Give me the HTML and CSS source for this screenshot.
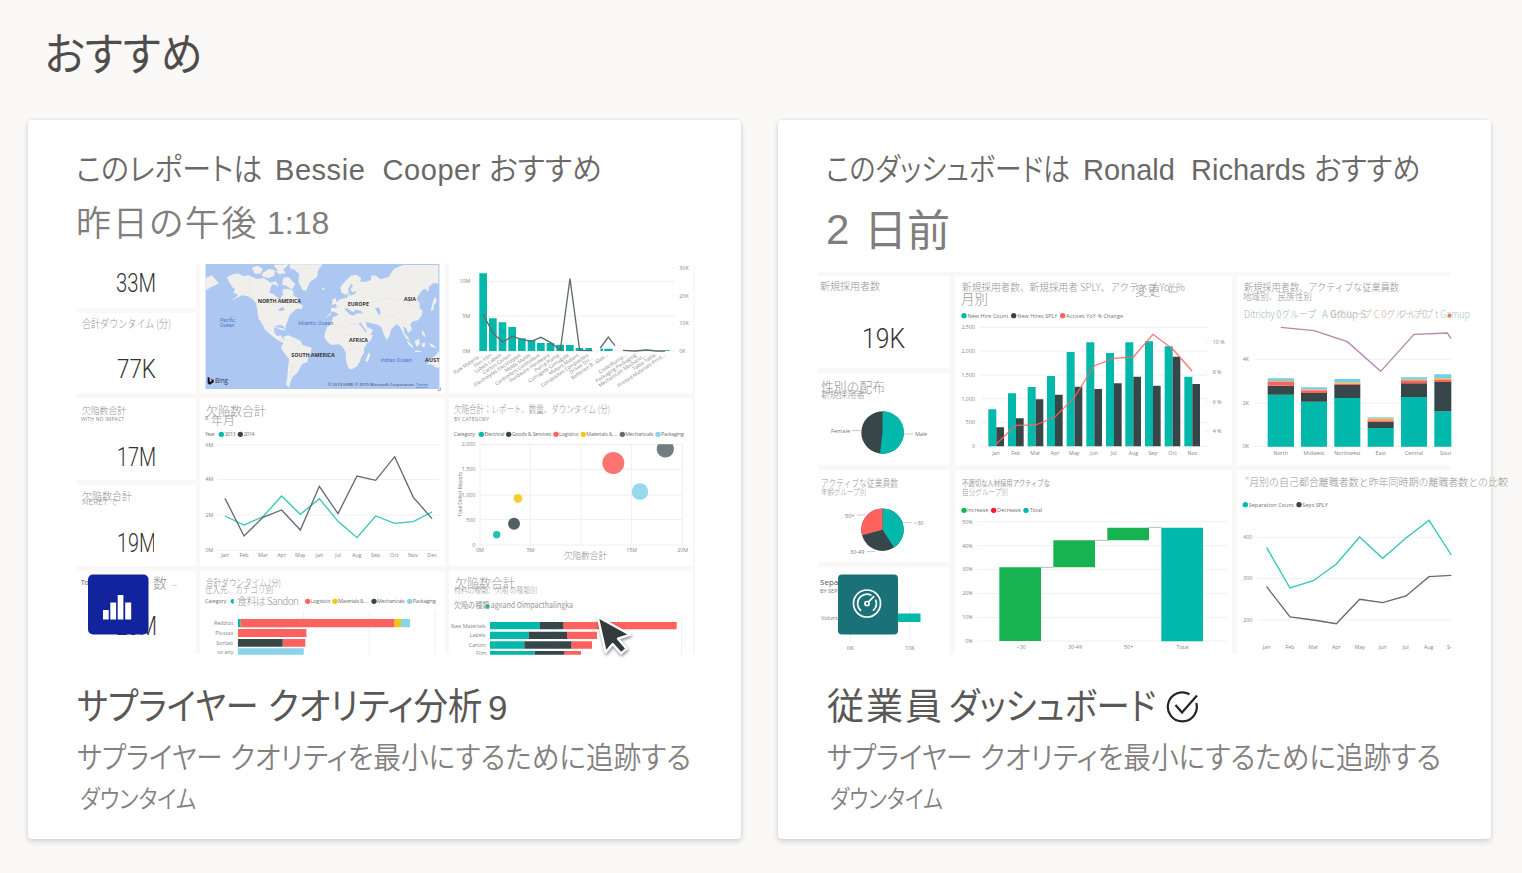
FILE: index.html
```html
<!DOCTYPE html>
<html lang="ja">
<head>
<meta charset="utf-8">
<title>おすすめ</title>
<link rel="stylesheet" href="styles.css">
</head>
<body>
<main class="page">
<h1 class="heading">おすすめ</h1>
<div class="cards">

<article class="card">
  <p class="from"><span class="jp a1">このレポートは</span><span class="latin b1">Bessie&nbsp; Cooper</span><span class="jp c1">おすすめ</span></p>
  <p class="time"><span class="jp t1">昨日の午後</span><span class="latin t2">1:18</span></p>
  <div class="thumb supplier">
    <div class="tile"><svg viewBox="76 264 120 44"><text class="kpi" x="116" y="292" textLength="40" lengthAdjust="spacingAndGlyphs">33M</text></svg></div>
    <div class="tile wide top"><svg viewBox="200 264 245 129">
      <g transform="translate(70 255) scale(.33333)">
        <clipPath id="mapclip"><rect x="406" y="27" width="703" height="375"/></clipPath>
        <g clip-path="url(#mapclip)">
          <rect x="406" y="27" width="703" height="375" fill="#abc7f2"/>
          <g fill="#f0efeb">
            <path d="M405 70l20-9 10 10 12 14-10 5-17 8-10 7-6-1z"/>
            <path d="M470 68l14-9 18-4 20 9 14-3 24 11 22-3 20 14 16-4 7 12-5 12-13 4 8 13 14 13 8-12 1-17 12-3 18 5 3 16 14 9 4 8-5 6 14 6-1 10-18 1-11 10-9 8-5 16-7 16-1 14-5-12-10-4-13 2-6 10 2 13 8 8 11-2 4 8 6 12 10 3-2 4-18-7-15-9-16-13-17-15-7-14-13-20-3-25-4-20-10-12-14-9-18-3-15 7-22 10 18-11 8-8-15-6 6-11-9-5z"/>
            <path d="M545 38l18-6 15 9-5 14-18 2zM577 55l20-13 18 3-2 17-18 8-18-6zM610 29l46-1-14 15-17 5zM616 48l24-4 8 10-20 4zM640 68l16-2 20 22-11 16-14-10-15-5z"/>
            <path d="M660 28h98l-14 18-2 20-22 14-11 27-11-2-13-25 3-22-14-14-15-4z"/>
            <path d="M640 245l15-4 19 8 18 9 6 12 27 8-2 14-8 12-3 17-15 6-10 17-7 12-10 6-7 14-4 15 1 8-12-10 4-22 2-28 3-26-14-18-10-16 4-10 5-8z"/>
            <path d="M790 186l22-8 19-2 3 11 16 6 17-1 8 17 10 18 8 13 16-1-6 16-15 15-6 10v15l-8 10-5 16-8 13-14 8-9 1-7-16-4-17 1-17-10-17-10-8-23 2-14-10-8-15 2-12 6-17 10-7zM897 291l4 10-8 20-7-4z"/>
            <path d="M783 178v-19l18-1-4-15 15-11 20-4 5-16-9 8-14-7-3-16 14-18 18-17 16-3 14 10-2 12 18-1 14-5 1-14 15 2 13 10 24-7 15-24 28-12h106v56l-15-2-13 11-2 16-8-10-10 4-10 14-7 12 10 17-2 10 10 9-3 15-11 14-15 3-8 8 5 17-12 10-5-14-9-6 3 20 11 12 6 12-13-9-10-19-9-17-9-5-15 14-6 20-7 13-9-15-8-24-15-8-19-4-13-4 5 16 17 9-6 12-20 16-13-8-7-19-13-23-18-5-10-10-7-10-7 9-7-13-14-5-12 11-13 12zM785 150l3-18 9-4 3 18zM757 98l9 4-10 4z"/>
            <path d="M1081 312l15-10 9-11 14 2v43l-20 2-16-11-12 3zM1010 255l18 17 4 10-18-15zM1034 258l13-7 3 15-10 9zM1055 266l9-4 2 12-9 3zM1035 286l20 3-2 3-18-2zM1076 264l14 6 10 9-16-3zM1056 222l8 15 4 11-12-10zM1082 168l8-3 2-15 8-9-3-15-7 9-4 17zM614 216l25 4 7 8-20-6z"/>
          </g>
          <g fill="#abc7f2"><path d="M606 88l15 3 5 17 15 10-15 13-13-13-15-5zM625 162l15-6 4 9-15 4zM834 103l10-17 5 4-8 14 7 8 12-5-6 10-14 5zM824 163l5-5 20 14 8-8 16 3 5 8-22 1-2 6-14-3zM915 160l12-3 5 14-5 12-5-11zM870 201l20 28-3 3-20-26z"/></g>
          <g fill="none" stroke="#dedcd5" stroke-width="1"><path d="M540 68v53l28 17h62M570 196l35 12 12 17M668 248l5 22 16 9M681 300l-17-12-12 13M676 338l-9-9-6 40M786 206l32 15 25-14 27 1M816 245l26-7 17 9M830 286l26-7 18 8M850 130l18 9 23-12M900 145l45-17 44 9 34-10 43 12M930 190l28-12 44 22M996 140l40 14 28-18"/></g>
          <g class="map-label"><text x="563" y="144" textLength="130">NORTH AMERICA</text><text x="833" y="153" textLength="64">EUROPE</text><text x="1002" y="138" textLength="36">ASIA</text><text x="837" y="262" textLength="57">AFRICA</text><text x="664" y="307" textLength="130">SOUTH AMERICA</text><text x="1065" y="321" textLength="55">AUSTR</text></g>
          <g class="sea"><text x="450" y="200">Pacific</text><text x="450" y="217">Ocean</text><text x="684" y="210" textLength="105">Atlantic Ocean</text><text x="932" y="321" textLength="93">Indian Ocean</text></g>
          <path d="M413 366l6 2v13l7-3-4-7 9 4v7l-12 7-6-4z" fill="#111"/><text x="435" y="384" font-size="19" fill="#333">Bing</text>
          <text x="774" y="393" font-size="12" fill="#333" textLength="257">© 2019 HERE © 2019 Microsoft Corporation</text><text x="1038" y="393" font-size="12" fill="#3a61b5" text-decoration="underline" textLength="36">Terms</text>
        </g>
        <path d="M1103 406h8v-8" stroke="#999" fill="none" stroke-width="3"/>
      </g></svg></div>
    <div class="tile wide top"><svg viewBox="449 264 244 129">
      <g transform="translate(385 255) scale(.33333)">
        <path class="grid" d="M272 79h597M272 183h597M272 288h597M862 39h8M862 122h8M862 205h8"/>
        <path fill="#01b8aa" d="M283 55h23v233h-23zM312 190h23v98h-23zM341 202h23v86h-23zM370 216h23v72h-23zM399 250h23v38h-23zM428 255h23v33h-23zM456 264h23v24h-23zM485 264h23v24h-23zM514 269h23v19h-23zM543 270h23v18h-23zM572 279h23v9h-23zM601 279h20v9h-20zM646 281h8v7h-8zM658 281h25v7h-25zM773 284h25v4h-25zM840 286h15v2h-15z"/>
        <path class="dark-line" d="M295 178l29 57 29 26 29-17 28 9 29 6 29-12 29 16 29 22 29-214 29 215 38 1M646 279l24-33 20 26M714 286l36 2 35-3 30 3h25"/>
        <g class="ax end"><text x="256" y="85">10M</text><text x="256" y="189">5M</text><text x="256" y="294">0M</text></g>
        <g class="ax"><text x="883" y="45">30K</text><text x="883" y="128">20K</text><text x="883" y="211">10K</text><text x="883" y="294">0K</text></g>
        <g class="ax end slanted">
          <text transform="translate(292 303) rotate(-34)">Raw Materia...</text><text transform="translate(322 303) rotate(-34)">Film Film</text><text transform="translate(350 303) rotate(-34)">Labels Labels</text><text transform="translate(379 303) rotate(-34)">Carton Carton</text><text transform="translate(408 303) rotate(-34)">Electrolytes Electrolytes</text><text transform="translate(437 303) rotate(-34)">Molds Molds</text><text transform="translate(466 303) rotate(-34)">Controllers Controllers</text><text transform="translate(495 303) rotate(-34)">Hardware Hardware</text><text transform="translate(524 303) rotate(-34)">Pump Pump</text><text transform="translate(553 303) rotate(-34)">Corrugate Corrugate</text><text transform="translate(582 303) rotate(-34)">Motors Motors</text><text transform="translate(611 303) rotate(-34)">Composites Composites</text><text transform="translate(624 312) rotate(-34)">Drives Dri...</text><text transform="translate(635 325) rotate(-34)">Batteries B...</text><text transform="translate(670 303) rotate(-34)">Glas...</text><text transform="translate(692 325) rotate(-34)">Crates...</text><text transform="translate(726 303) rotate(-34)">Pump...</text><text transform="translate(755 303) rotate(-34)">Packaging Packaging</text><text transform="translate(784 303) rotate(-34)">Mechanicals Mechanic...</text><text transform="translate(813 303) rotate(-34)">Table Table</text><text transform="translate(842 303) rotate(-34)">Printed Materials Print...</text>
        </g>
      </g></svg></div>
    <div class="tile"><svg viewBox="76 313 120 80"><text class="ja" x="82" y="328" font-size="11" textLength="89" lengthAdjust="spacingAndGlyphs">合計ダウンタイム (分)</text><text class="kpi" x="117" y="378" textLength="39" lengthAdjust="spacingAndGlyphs">77K</text></svg></div>
    <div class="tile"><svg viewBox="76 398 120 82"><text class="ja" x="82" y="414" font-size="9.5" textLength="44" lengthAdjust="spacingAndGlyphs">欠陥数合計</text><text class="cap" x="81" y="421" textLength="43">WITH NO IMPACT</text><text class="kpi" x="117" y="466" textLength="39" lengthAdjust="spacingAndGlyphs">17M</text></svg></div>
    <div class="tile wide tall"><svg viewBox="200 398 245 168">
      <text class="ja" x="206" y="416" font-size="12.5" textLength="60" lengthAdjust="spacingAndGlyphs">欠陥数合計</text><text class="cap" x="205" y="420">B</text><text class="ja" x="211" y="425" font-size="12.5" textLength="24" lengthAdjust="spacingAndGlyphs">年月</text>
      <g transform="translate(70 455) scale(.33333)">
        <g class="lg"><text x="405" y="-57" textLength="30">Year</text><text x="464" y="-57" textLength="33">2013</text><text x="521" y="-57" textLength="33">2014</text></g>
        <circle cx="454" cy="-62" r="8" fill="#01b8aa"/><circle cx="511" cy="-62" r="8" fill="#374649"/>
        <path class="grid" d="M443-30h666M443 74h666M443 180h666M443 286h666"/>
        <g class="ax end"><text x="430" y="-25">6M</text><text x="430" y="79">4M</text><text x="430" y="186">2M</text><text x="430" y="291">0M</text></g>
        <path class="teal-line" d="M465 183l57 27 57-25 56-62 56 55 57-47 56 68 57 49 56-65 57 22 56-5 56-29" transform="translate(0 0)"/>
        <path class="dark-line" d="M465 130l57 113 57-56 56-22 56 60 57-131 56 82 57-113 56 13 57-71 56 122 56 64"/>
        <g class="ax mid"><text x="465" y="307">Jan</text><text x="522" y="307">Feb</text><text x="579" y="307">Mar</text><text x="635" y="307">Apr</text><text x="691" y="307">May</text><text x="748" y="307">Jan</text><text x="804" y="307">Jul</text><text x="860" y="307">Aug</text><text x="917" y="307">Sep</text><text x="973" y="307">Oct</text><text x="1029" y="307">Nov</text><text x="1086" y="307">Dec</text></g>
      </g></svg></div>
    <div class="tile wide tall"><svg viewBox="449 398 244 168">
      <text class="ja" x="454" y="413" font-size="10" textLength="156" lengthAdjust="spacingAndGlyphs">欠陥合計：レポート、数量、ダウンタイム (分)</text><text class="cap" x="454" y="421" textLength="35">BY CATEGORY</text>
      <g transform="translate(385 455) scale(.33333)">
        <g class="lg"><text x="206" y="-57" textLength="64">Category</text><text x="298" y="-57" textLength="60">Electrical</text><text x="380" y="-57" textLength="119">Goods &amp; Services</text><text x="522" y="-57" textLength="59">Logistics</text><text x="604" y="-57" textLength="93">Materials &amp; ...</text><text x="721" y="-57" textLength="84">Mechanicals</text><text x="828" y="-57" textLength="69">Packaging</text></g>
        <circle cx="289" cy="-62" r="8" fill="#01b8aa"/><circle cx="371" cy="-62" r="8" fill="#374649"/><circle cx="513" cy="-62" r="8" fill="#fd625e"/><circle cx="595" cy="-62" r="8" fill="#f2c80f"/><circle cx="712" cy="-62" r="8" fill="#5f6b6d"/><circle cx="819" cy="-62" r="8" fill="#8ad4eb"/>
        <path class="grid" d="M285-32h608M285 43h608M285 120h608M285 194h608M285 270h608M285-32v302M436-32v302M588-32v302M740-32v302M893-32v302"/>
        <g class="ax end"><text x="271" y="-26">2,000</text><text x="271" y="49">1,500</text><text x="271" y="125">1,000</text><text x="271" y="200">500</text><text x="271" y="275">0</text></g>
        <g class="ax mid"><text x="285" y="291">0M</text><text x="437" y="291">5M</text><text x="740" y="291">15M</text><text x="893" y="291">20M</text><text transform="translate(230 118) rotate(-90)" textLength="135">Total Defect Reports</text></g>
        <circle cx="335" cy="239" r="11" fill="#22bfb3"/><circle cx="387" cy="206" r="18" fill="#536063"/><circle cx="399" cy="130" r="13" fill="#f3cd30"/><circle cx="685" cy="24" r="33" fill="#fd7471"/><circle cx="765" cy="110" r="25" fill="#98d9ed"/><path d="M819-32h44a26 26 0 1 1-44 0z" fill="#727d7f"/>
      </g>
      <text class="ja" x="564" y="559" font-size="9.5" textLength="43" lengthAdjust="spacingAndGlyphs">欠陥数合計</text></svg></div>
    <div class="tile"><svg viewBox="76 485 120 81"><text class="ja" x="82" y="500" font-size="10.5" textLength="50" lengthAdjust="spacingAndGlyphs">欠陥数合計</text><text class="ja" x="82" y="505" font-size="8" textLength="36" lengthAdjust="spacingAndGlyphs">MERET で</text><clipPath id="nineteen"><path d="M110 525h44v35h-44z"/></clipPath><text clip-path="url(#nineteen)" class="kpi" x="117" y="552" textLength="39" lengthAdjust="spacingAndGlyphs">19M</text></svg></div>
    <div class="tile"><svg viewBox="76 571 120 83">
      <text x="81" y="585" font-size="6.5" fill="#555">To</text><text class="ja" x="153" y="588" font-size="14">数</text><text class="ja" x="172" y="586" font-size="10">..</text><text class="kpi" x="116" y="635" textLength="41" lengthAdjust="spacingAndGlyphs">20M</text>
      <rect x="88" y="574.5" width="60.5" height="60" rx="5" fill="#12239e"/>
      <path d="M103 610h5.7v9.5H103zM110.3 602.5h5.8v17h-5.8zM117.7 595h5.7v24.500h-5.7zM125.2 602.500h6v17h-6z" fill="#fff"/></svg></div>
    <div class="tile wide"><svg viewBox="200 571 245 83">
      <text class="ja" x="206" y="586" font-size="9.500" textLength="75" lengthAdjust="spacingAndGlyphs">合計ダウンタイム (分)</text><text class="ja" x="205" y="592.5" font-size="9.5" textLength="68" lengthAdjust="spacingAndGlyphs">仕入先、カテゴリ別</text><text class="ja" x="237" y="605" font-size="10" textLength="62">食料は Sandon</text>
      <g transform="translate(70 455) scale(.33333)">
        <g class="lg"><text x="405" y="445" textLength="64">Category</text><text x="722" y="445" textLength="60">Logistics</text><text x="804" y="445" textLength="92">Materials &amp; ...</text><text x="921" y="445" textLength="83">Mechanicals</text><text x="1028" y="445" textLength="70">Packaging</text></g>
        <path d="M491 432h-2a7 7 0 0 0 0 14h2z" fill="#01b8aa"/><circle cx="713" cy="439" r="8" fill="#fd625e"/><circle cx="795" cy="439" r="8" fill="#f2c80f"/><circle cx="912" cy="439" r="8" fill="#374649"/><circle cx="1019" cy="439" r="8" fill="#8ad4eb"/>
        <path class="grid" d="M504 468v130M701 468v130M898 468v130M1096 468v130"/>
        <path fill="#01b8aa" d="M504 492h8v25h-8z"/><path fill="#fd625e" d="M512 492h462v25H512zM504 522h205v24H504zM638 552h68v23h-68z"/><path fill="#f2c80f" d="M974 492h19v25h-19z"/><path fill="#8ad4eb" d="M993 492h27v25h-27zM504 580h197v19H504z"/><path fill="#374649" d="M504 552h134v23H504z"/>
        <g class="ax end"><text x="490" y="510">Reddoit</text><text x="490" y="539">Plustax</text><text x="490" y="569">Sonlab</text><text x="490" y="597">xx-any</text></g>
      </g></svg></div>
    <div class="tile wide"><svg viewBox="449 571 244 83">
      <text class="ja" x="455" y="588" font-size="12.500" textLength="60" lengthAdjust="spacingAndGlyphs">欠陥数合計</text><text class="ja" x="454" y="593" font-size="8" textLength="83" lengthAdjust="spacingAndGlyphs">材料の種類、欠陥 の種類別</text><circle cx="487.500" cy="606.500" r="2.2" fill="#01b8aa"/><text class="ja strong" x="454" y="607.500" font-size="8" textLength="119" lengthAdjust="spacingAndGlyphs">欠陥の種類 ageand Oimpacthalingka</text>
      <g transform="translate(385 455) scale(.33333)">
        <path class="grid" d="M315 485v114M506 485v114M700 485v114M890 485v114"/>
        <path fill="#01b8aa" d="M315 501h149v22H315zM315 530h116v22H315zM315 559h103v22H315zM315 588h134v11H315z"/><path fill="#374649" d="M464 501h72v22h-72zM431 530h115v22H431zM418 559h142v22H418zM449 588h90v11h-90z"/><path fill="#fd625e" d="M536 501h339v22H536zM546 530h90v22h-90zM560 559h61v22h-61zM539 588h49v11h-49z"/>
        <g class="ax end"><text x="302" y="518">Raw Materials</text><text x="302" y="547">Labels</text><text x="302" y="576">Carton</text></g><text class="ax" x="274" y="600">Film</text>
        <path class="cursor" d="M638 485l24 107 21-25 25 28 17-14-26-30 37-12z"/>
      </g></svg></div>
  </div>
  <h2 class="name"><span class="jp n1">サプライヤー</span><span class="jp n2">クオリティ分析</span><span class="latin n3">9</span></h2>
  <p class="desc"><span class="jp d1">サプライヤー</span><span class="jp d2">クオリティを最小にするために追跡する</span></p>
  <p class="sub"><span class="jp s1">ダウンタイム</span></p>
</article>

<article class="card">
  <p class="from"><span class="jp a2">このダッシュボードは</span><span class="latin b2">Ronald&nbsp; Richards</span><span class="jp c2">おすすめ</span></p>
  <p class="time big"><span class="latin t3">2</span><span class="jp t4">日前</span></p>
  <div class="thumb employee">
    <div class="tile"><svg viewBox="818 276 132 92"><text class="ja" x="820" y="290" font-size="10.500" textLength="60" lengthAdjust="spacingAndGlyphs">新規採用者数</text><text class="kpi large" x="862" y="348" textLength="43" lengthAdjust="spacingAndGlyphs">19K</text></svg></div>
    <div class="tile wide"><svg viewBox="955 276 277 189">
      <text class="ja" x="962" y="291" font-size="10.500" textLength="223" lengthAdjust="spacingAndGlyphs">新規採用者数、新規採用者 SPLY、アクティブ YoY %</text><text class="ja" x="961" y="304" font-size="13.500" textLength="27" lengthAdjust="spacingAndGlyphs">月別</text><text class="ja" x="1135" y="295" font-size="13" textLength="25" lengthAdjust="spacingAndGlyphs">変更</text><path d="M1169 287h8v5h-8zM1170 293l2-2" fill="none" stroke="#bbb"/>
      <g transform="translate(810 265) scale(.33333)">
        <g class="lg"><text x="473" y="158" textLength="122">New Hire Count</text><text x="622" y="158" textLength="120">New Hires SPLY</text><text x="769" y="158" textLength="170">Actives YoY % Change</text></g><circle cx="462" cy="152" r="8" fill="#01b8aa"/><circle cx="611" cy="152" r="8" fill="#374649"/><circle cx="758" cy="152" r="8" fill="#fd625e"/>
        <path class="grid" d="M512 187h683M512 258h683M512 330h683M512 401h683M512 473h683M512 544h683M1185 232h8M1185 321h8M1185 410h8M1185 499h8"/>
        <path fill="#01b8aa" d="M535 433h24v111h-24zM594 385h24v159h-24zM653 366h24v178h-24zM711 333h24v211h-24zM770 261h24v283h-24zM829 232h24v312h-24zM888 264h24v280h-24zM946 232h24v312h-24zM1005 229h24v315h-24zM1064 244h24v300h-24zM1123 335h24v209h-24z"/>
        <path fill="#374649" d="M559 487h23v57h-23zM618 460h23v84h-23zM677 403h23v141h-23zM735 389h23v155h-23zM794 365h23v179h-23zM853 372h23v172h-23zM912 355h23v189h-23zM970 335h23v209h-23zM1029 362h23v182h-23zM1088 275h23v269h-23zM1147 357h23v187h-23z"/>
        <path fill="none" stroke="#fd625e" stroke-opacity=".85" stroke-width="4" d="M558 538l59-57 59-1 59-24 58-58 59-95 59-23 59-4 59-68 59 44 58 66"/>
        <g class="ax end"><text x="495" y="193">2,500</text><text x="495" y="264">2,000</text><text x="495" y="335">1,500</text><text x="495" y="407">1,000</text><text x="495" y="478">500</text><text x="495" y="550">0</text></g>
        <g class="ax"><text x="1208" y="238">10 %</text><text x="1208" y="327">8 %</text><text x="1208" y="416">6 %</text><text x="1208" y="505">4 %</text></g>
        <g class="ax mid"><text x="558" y="569">Jan</text><text x="617" y="569">Feb</text><text x="676" y="569">Mar</text><text x="735" y="569">Apr</text><text x="793" y="569">May</text><text x="852" y="569">Jun</text><text x="911" y="569">Jul</text><text x="970" y="569">Aug</text><text x="1029" y="569">Sep</text><text x="1088" y="569">Oct</text><text x="1147" y="569">Nov</text></g>
      </g></svg></div>
    <div class="tile wide"><svg viewBox="1237 276 214 189">
      <text class="ja" x="1244" y="291" font-size="10.500" textLength="155" lengthAdjust="spacingAndGlyphs">新規採用者数、アクティブな従業員数</text><text class="ja" x="1243" y="300" font-size="9" textLength="69" lengthAdjust="spacingAndGlyphs">地域別、民族性別</text>
      <g class="groups" font-size="10"><text x="1244" y="318" textLength="72" lengthAdjust="spacingAndGlyphs" fill="#9fb5b2">Ditrichy 0グループ</text><text x="1322" y="318" textLength="44" lengthAdjust="spacingAndGlyphs" fill="#9fb5b2">A Group S</text><text x="1331" y="318" textLength="96" lengthAdjust="spacingAndGlyphs" fill="#d6b29d">0グループ C 0グループ0</text><text x="1398" y="318" textLength="72" lengthAdjust="spacingAndGlyphs" fill="#a9c1c7">グループ t Gamup</text></g><circle cx="1449.500" cy="315.500" r="2" fill="#f47c4a"/>
      <g transform="translate(1115 265) scale(.33333)">
        <path class="grid" d="M418 283h590M418 414h590M418 544h590"/>
        <path fill="#01b8aa" d="M458 389h79v156h-79zM558 410h78v135h-78zM658 399h78v146h-78zM758 489h78v56h-78zM858 396h78v149h-78zM958 439h51v106h-51z"/>
        <path fill="#374649" d="M458 362h79v27h-79zM558 384h78v26h-78zM658 360h78v39h-78zM758 470h78v19h-78zM858 355h78v41h-78zM958 351h51v88h-51z"/>
        <path fill="#fd625e" d="M458 351h79v11h-79zM558 376h78v8h-78zM658 356h78v4h-78zM758 466h78v4h-78zM858 346h78v9h-78zM958 345h51v6h-51z"/>
        <path fill="#f3b44d" d="M458 348h79v3h-79zM558 373h78v3h-78zM658 352h78v4h-78zM758 460h78v6h-78zM858 343h78v3h-78zM958 340h51v5h-51z"/>
        <path fill="#74cfe8" d="M458 340h79v8h-79zM558 367h78v6h-78zM658 342h78v10h-78zM758 457h78v3h-78zM858 337h78v6h-78zM958 328h51v12h-51z"/>
        <path fill="none" stroke="#a66999" stroke-opacity=".8" stroke-width="4" d="M497 187l100 10 100 33 100 89 100-111 100-4 11 17"/>
        <g class="ax end"><text x="402" y="289">4K</text><text x="402" y="420">2K</text><text x="402" y="549">0K</text></g>
        <g class="ax mid"><text x="497" y="569">North</text><text x="597" y="569">Midwest</text><text x="697" y="569">Northwest</text><text x="797" y="569">East</text><text x="897" y="569">Central</text></g><text class="ax" x="975" y="569">Sout</text>
      </g></svg></div>
    <div class="tile"><svg viewBox="818 373 132 92"><text class="ja" x="821" y="392" font-size="13.500" textLength="64" lengthAdjust="spacingAndGlyphs">性別の配布</text><text class="ja" x="821" y="398" font-size="9" textLength="44" lengthAdjust="spacingAndGlyphs">新規採用者</text>
      <circle cx="882.500" cy="432.500" r="21.200" fill="#374649"/><path d="M882.500 432.500V411.300a21.200 21.200 0 1 1-2.500 42.200z" fill="#01b8aa"/>
      <path d="M852 430.500h9M904 434h9" stroke="#bbb" stroke-width=".8"/><g class="cap2"><text x="831" y="432.500" textLength="19">Female</text><text x="915" y="436" textLength="12">Male</text></g></svg></div>
    <div class="tile"><svg viewBox="818 470 132 92"><text class="ja" x="821" y="487" font-size="10" textLength="77" lengthAdjust="spacingAndGlyphs">アクティブな従業員数</text><text class="ja" x="821" y="495" font-size="8" textLength="45" lengthAdjust="spacingAndGlyphs">年齢グループ別</text>
      <circle cx="882.500" cy="529.700" r="21.200" fill="#374649"/><path d="M882.500 529.700v-21.200a21.200 21.200 0 0 1 11.600 39z" fill="#01b8aa"/><path d="M882.500 529.700v-21.200a21.200 21.200 0 0 0-20.500 26.800z" fill="#fd625e"/>
      <path d="M857 515h8M903 522.700h9M867 551.600h8" stroke="#bbb" stroke-width=".8"/><g class="cap2"><text x="845" y="517.500">50+</text><text x="914" y="525">&lt;30</text><text x="850" y="553.500">30-49</text></g></svg></div>
    <div class="tile wide"><svg viewBox="955 470 277 184">
      <text class="ja strong" x="962" y="486" font-size="8" textLength="88" lengthAdjust="spacingAndGlyphs">不適切な人材採用アクティブな</text><text class="ja" x="962" y="495" font-size="8" textLength="46" lengthAdjust="spacingAndGlyphs">自分グループ別</text>
      <g transform="translate(810 460) scale(.33333)">
        <g class="lg"><text x="471" y="157" textLength="64">Increase</text><text x="562" y="157" textLength="70">Decrease</text><text x="659" y="157" textLength="37">Total</text></g><circle cx="462" cy="151" r="8" fill="#17b352"/><circle cx="551" cy="151" r="8" fill="#f5172d"/><circle cx="648" cy="151" r="8" fill="#01b8aa"/>
        <path class="grid" d="M503 185h746M503 257h746M503 328h746M503 400h746M503 472h746M503 543h746"/><path d="M693 322h37M855 241h37M1016 202h38" stroke="#bbb" stroke-width="3"/>
        <path fill="#17b352" d="M568 322h125v221H568zM730 241h125v81H730zM892 203h125v38H892z"/><path fill="#01b8aa" d="M1054 203h125v341h-125z"/>
        <g class="ax end"><text x="488" y="191">50%</text><text x="488" y="263">40%</text><text x="488" y="334">30%</text><text x="488" y="406">20%</text><text x="488" y="477">10%</text><text x="488" y="549">0%</text></g>
        <g class="ax mid"><text x="634" y="567">&lt;30</text><text x="795" y="567">30-49</text><text x="956" y="567">50+</text><text x="1118" y="567">Total</text></g>
      </g></svg></div>
    <div class="tile wide"><svg viewBox="1237 470 214 184">
      <text class="ja" x="1245" y="486" font-size="10" textLength="263" lengthAdjust="spacingAndGlyphs">"月別の自己都合離職者数と昨年同時期の離職者数との比較</text>
      <g transform="translate(1115 460) scale(.33333)">
        <g class="lg"><text x="401" y="141" textLength="135">Separation Count</text><text x="562" y="141" textLength="76">Seps SPLY</text></g><circle cx="391" cy="134" r="8" fill="#01b8aa"/><circle cx="552" cy="134" r="8" fill="#374649"/>
        <path class="grid" d="M428 232h580M428 356h580M428 480h580"/>
        <path class="teal-line" d="M455 263l70 121 70-22 69-50 70-81 69 64 70-61 69-53 67 104"/><path class="dark-line" d="M455 380l70 91 70 9 69 11 70-73 69 10 70-20 69-58 67-4"/>
        <g class="ax end"><text x="412" y="238">400</text><text x="412" y="361">300</text><text x="412" y="486">200</text></g>
        <g class="ax mid"><text x="455" y="567">Jan</text><text x="525" y="567">Feb</text><text x="595" y="567">Mar</text><text x="664" y="567">Apr</text><text x="734" y="567">May</text><text x="803" y="567">Jun</text><text x="872" y="567">Jul</text><text x="941" y="567">Aug</text><text x="1003" y="567">S-</text></g>
      </g></svg></div>
    <div class="tile"><svg viewBox="818 567 132 87">
      <text x="820" y="584.500" font-size="8" fill="#555">Separati</text><text class="cap2" x="820" y="592.500">BY SEPA</text><text class="cap2" x="821" y="619.500">Voluntary</text>
      <path d="M850.500 605v36M910 605v36" stroke="#eee"/><path d="M851 613.500h69.500v8.500H851z" fill="#01b8aa"/><g class="cap2"><text x="847" y="649.500">0K</text><text x="905" y="649.500">10K</text></g>
      <rect x="838" y="574.500" width="60" height="60" rx="4" fill="#1a7177"/>
      <g fill="none" stroke="#fff" stroke-width="1.700" stroke-linecap="round"><circle cx="867" cy="603.500" r="13.500"/><path d="M860.500 610.300a9.300 9.300 0 0 1 10.300-15.200M875.700 600.200a9.300 9.300 0 0 1-2.200 10M868.500 601.800l5.200-5.200"/><circle cx="867" cy="603.600" r="2.100"/></g></svg></div>
  </div>
  <h2 class="name"><span class="jp n4">従業員</span><span class="jp n5">ダッシュボード</span><svg class="check" viewBox="0 0 33 33"><path d="M23.500 4.300A14.500 14.500 0 1 0 30.300 13M9.500 15l6.500 7.500L31 5.500" fill="none" stroke="#252423" stroke-width="2.200"/></svg></h2>
  <p class="desc"><span class="jp d1">サプライヤー</span><span class="jp d2">クオリティを最小にするために追跡する</span></p>
  <p class="sub second"><span class="jp s2">ダウンタイム</span></p>
</article>
</div>
</main>
</body>
</html>
```
FILE: styles.css
```css
* { box-sizing: border-box; }
body {
  margin: 0;
  background: #faf9f7;
  color: #605e5c;
  font-family: "Noto Sans CJK JP", sans-serif;
  font-feature-settings: "palt";
}
.page { height: 873px; padding: 24px 31px 0 28px; overflow: hidden; }
.heading {
  width: 300px;
  height: 96px;
  margin: 0;
  padding-left: 18px;
  font-size: 45px;
  line-height: 60px;
  font-weight: 400;
  color: #4f4d4b;
  transform: translateY(-2px) scaleX(.93);
  transform-origin: 0 0;
}
.cards { display: grid; grid-template-columns: 713px 713px; gap: 37px; }
.card {
  height: 719px;
  padding: 25px 0 0 48px;
  background: #fff;
  border-radius: 4px;
  box-shadow: 0 3px 6px rgba(0, 0, 0, .14), 0 0 3px rgba(0, 0, 0, .1);
}
.card p, .card h2 { display: flex; align-items: center; margin: 0; white-space: nowrap; font-weight: 350; }
.card .latin { font-family: "Liberation Sans", sans-serif; font-feature-settings: normal; }

/* Condensed Japanese runs: each run keeps its own layout width */
.jp { transform: translateY(-2px) scaleX(var(--condense, 1)); transform-origin: 0 50%; }

.card .from { height: 48px; font-size: 31px; color: #6b6967; }
.from .jp { margin-top: -2px; }
.from .latin { font-size: 29px; padding-top: 3px; }
.a1 { width: 199px; --condense: .935; }
.b1 { width: 214px; letter-spacing: .55px; }
.a2 { width: 257px; --condense: .87; }
.b2 { width: 231px; }
.c1 { --condense: .965; }
.c2 { --condense: .91; }

.card .time { height: 58px; margin-bottom: 13px; font-size: 35px; color: #807e7c; }
.card .time.big { height: 72px; margin-bottom: 7px; font-size: 43px; font-weight: 400; }
.time .latin { font-size: 32px; padding-top: 3px; }
.time.big .latin { font-size: 42px; padding-top: 1px; }
.t1 { width: 191px; letter-spacing: 1.7px; }
.t3 { width: 38px; }

.thumb { display: grid; background: #f9f8f6; }
.supplier {
  width: 619px;
  height: 390px;
  grid-template: 44px 80px 82px 81px 83px / 120px 245px 244px;
  grid-auto-flow: dense;
  gap: 5px 4px;
}
.employee {
  width: 633px;
  height: 382px;
  margin-left: -8px;
  padding-top: 4px;
  grid-template: 92px 92px 92px 87px / 132px 277px 214px;
  gap: 5px;
}
.tile { min-width: 0; background: #fff; }
.tile svg { display: block; width: 100%; height: 100%; overflow: visible; }
.supplier .wide.top, .supplier .wide.tall, .employee .wide { grid-row: span 2; }

.tile text { font-family: "Open Sans", sans-serif; font-feature-settings: normal; }
.tile text.kpi { font-family: Roboto, sans-serif; font-weight: 300; fill: #333; }
.kpi { font-size: 26px; }
.kpi.large { font-size: 28.5px; }
.tile text.ja, .tile .groups text { font-family: "Noto Sans CJK JP", sans-serif; font-weight: 300; }
.tile text.ja { fill: #959595; }
.tile text.strong { font-weight: 400; }
.cap { font-size: 5px; fill: #888; }
.cap2 { font-size: 5.5px; fill: #777; }
.ax { font-size: 16px; fill: #858585; }
.lg { font-size: 16px; fill: #707070; }
.slanted { font-size: 15px; }
.end { text-anchor: end; }
.mid { text-anchor: middle; }
.grid { fill: none; stroke: #efefef; stroke-width: 3; }
.teal-line { fill: none; stroke: #34c6bb; stroke-width: 4; }
.dark-line { fill: none; stroke: #5f6b6d; stroke-width: 4; }
.map-label { font-size: 16px; font-weight: 700; fill: #333; }
.tile .sea text { font-family: Roboto, sans-serif; font-style: normal; }
.sea { font-size: 15px; fill: #4a74c4; }
.cursor { fill: #333a3d; stroke: #fff; stroke-width: 7; stroke-linejoin: round; filter: drop-shadow(2px 5px 5px rgba(0, 0, 0, .45)); }

.card .name { height: 52px; margin-top: 26px; font-size: 37px; font-weight: 400; color: #5a5856; }
.name .latin { font-size: 35px; font-weight: 400; padding-top: 3px; }
.n1 { width: 191px; margin-left: 1px; --condense: .89; }
.n2 { width: 220px; --condense: .925; }
.n4 { width: 122px; margin-left: 1px; letter-spacing: 2px; }
.n5 { width: 217px; --condense: .9; }
.check { width: 33px; height: 33px; }
.card .desc { height: 50px; font-size: 30px; color: #838180; }
.d1 { width: 153px; margin-left: 1px; --condense: .88; }
.d2 { --condense: .922; }
.card .sub { height: 34px; padding-left: 4px; font-size: 25px; color: #838180; }
.s1 { --condense: .865; }
.s2 { --condense: .84; }
```
